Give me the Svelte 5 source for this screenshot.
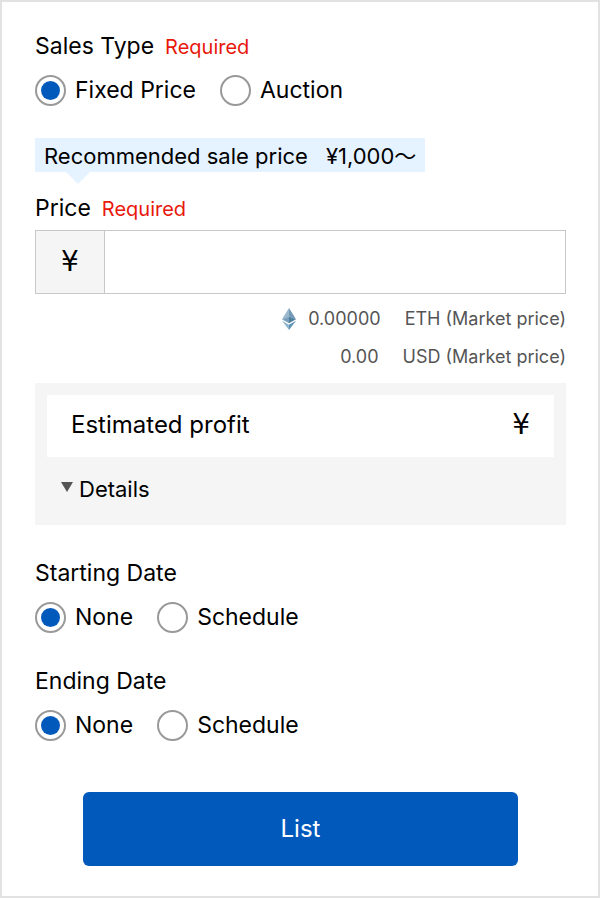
<script lang="ts">
  let salesType = $state("fixed");
  let startingDate = $state("none");
  let endingDate = $state("none");
  let price = $state("");
  let detailsOpen = $state(false);

  const dateOptions = [
    { value: "none", label: "None" },
    { value: "schedule", label: "Schedule" },
  ];
</script>

<form class="listing-form" onsubmit={(e) => e.preventDefault()}>
  <fieldset>
    <legend>Sales Type <span class="required">Required</span></legend>
    <div class="options">
      <label class="option">
        <input type="radio" name="sales-type" value="fixed" bind:group={salesType} />
        <span>Fixed Price</span>
      </label>
      <label class="option">
        <input type="radio" name="sales-type" value="auction" bind:group={salesType} />
        <span>Auction</span>
      </label>
    </div>
  </fieldset>

  <div class="price-section">
    <p class="recommended">
      <span>Recommended sale price</span>
      <span>¥1,000〜</span>
    </p>
    <label class="title" for="price">Price <span class="required">Required</span></label>
    <div class="price-field">
      <span class="yen prefix">¥</span>
      <input id="price" type="text" inputmode="numeric" bind:value={price} />
    </div>
    <div class="market-row">
      <svg class="eth" viewBox="0 0 14 22" aria-hidden="true">
        <path d="M7 0 0 11.2 7 8.4Z" fill="#9ab8cd" />
        <path d="M7 0v8.4l7 2.8Z" fill="#7399b5" />
        <path d="M0 11.2 7 8.4v6.8Z" fill="#7a9fba" />
        <path d="M14 11.2 7 8.4v6.8Z" fill="#50809f" />
        <path d="M0 12.8 7 22v-5.2Z" fill="#8fb4cd" />
        <path d="M14 12.8 7 22v-5.2Z" fill="#5f93b6" />
      </svg>
      <span class="amount">0.00000</span>
      <span>ETH (Market price)</span>
    </div>
    <div class="market-row">
      <span class="amount">0.00</span>
      <span>USD (Market price)</span>
    </div>
  </div>

  <div class="profit">
    <div class="profit-total">
      <span>Estimated profit</span>
      <span class="yen">¥</span>
    </div>
    <button
      type="button"
      class="details-btn"
      aria-expanded={detailsOpen}
      onclick={() => (detailsOpen = !detailsOpen)}
    >
      <svg class="caret" viewBox="0 0 12 10" aria-hidden="true">
        <path d="M0 0h12L6 10Z" fill="#555" />
      </svg>
      Details
    </button>
  </div>

  <fieldset>
    <legend>Starting Date</legend>
    <div class="options">
      {#each dateOptions as o}
        <label class="option">
          <input type="radio" name="starting-date" value={o.value} bind:group={startingDate} />
          <span>{o.label}</span>
        </label>
      {/each}
    </div>
  </fieldset>

  <fieldset>
    <legend>Ending Date</legend>
    <div class="options">
      {#each dateOptions as o}
        <label class="option">
          <input type="radio" name="ending-date" value={o.value} bind:group={endingDate} />
          <span>{o.label}</span>
        </label>
      {/each}
    </div>
  </fieldset>

  <button type="submit" class="list-btn">List</button>
</form>

<style>
  .listing-form {
    box-sizing: border-box;
    min-height: 100vh;
    padding: 28px 32px 30px 33px;
    border: 2px solid #e2e2e2;
    background: #fff;
    color: #000;
    font-family: Inter, "Noto Sans CJK JP", sans-serif;
    font-size: 23px;
    line-height: 32px;
    display: flex;
    flex-direction: column;
    gap: 32px;
  }

  fieldset {
    min-width: 0;
    margin: 0;
    padding: 0;
    border: 0;
  }

  legend,
  .title {
    display: flex;
    align-items: baseline;
    gap: 11px;
    padding: 0;
  }

  .required {
    color: #e8180c;
    font-size: 20px;
    line-height: 24px;
  }

  .options {
    display: flex;
    gap: 24px;
    margin-top: 12px;
  }

  .option {
    display: flex;
    align-items: center;
    gap: 9px;
  }

  input[type="radio"] {
    appearance: none;
    box-sizing: border-box;
    width: 31px;
    height: 31px;
    margin: 0;
    border: 2px solid #999;
    border-radius: 50%;
    display: grid;
    place-items: center;
  }

  input[type="radio"]:checked::before {
    content: "";
    width: 19px;
    height: 19px;
    border-radius: 50%;
    background: #0059bb;
  }

  .price-section {
    display: flex;
    flex-direction: column;
  }

  .recommended {
    position: relative;
    align-self: flex-start;
    display: flex;
    gap: 18px;
    margin: 0 0 20px;
    padding: 2px 9px 0;
    background: #e5f2ff;
    font-size: 22px;
  }

  .recommended::after {
    content: "";
    position: absolute;
    top: 100%;
    left: 31px;
    border: 12px solid transparent;
    border-top-color: #e5f2ff;
    border-bottom: 0;
  }

  .price-field {
    display: flex;
    height: 62px;
    margin: 6px 0;
    border: 1px solid #c8c8c8;
  }

  .yen {
    font-family: "DejaVu Sans", sans-serif;
    font-size: 28px;
  }

  .prefix {
    width: 68px;
    border-right: 1px solid #c8c8c8;
    background: #f5f5f5;
    line-height: 62px;
    text-align: center;
  }

  .price-field input {
    flex: 1;
    min-width: 0;
    padding: 0 16px;
    border: 0;
    font: inherit;
  }

  .market-row {
    display: flex;
    align-items: center;
    justify-content: flex-end;
    color: #555;
    font-size: 18px;
    line-height: 38px;
  }

  .eth {
    width: 14px;
    height: 22px;
    margin-right: 12px;
  }

  .amount {
    margin-right: 24px;
  }

  .profit {
    margin-top: -25px;
    padding: 12px 12px 20px;
    background: #f5f5f5;
  }

  .profit-total {
    display: flex;
    justify-content: space-between;
    padding: 14px 24px 16px;
    background: #fff;
    font-size: 24px;
  }

  .details-btn {
    display: flex;
    align-items: center;
    gap: 6px;
    margin: 16px 0 0 14px;
    padding: 0;
    border: 0;
    background: none;
    color: inherit;
    font: inherit;
    font-size: 22px;
  }

  .caret {
    width: 12px;
    height: 10px;
    margin-bottom: 4px;
  }

  .list-btn {
    width: 82%;
    margin: 19px auto 0;
    padding: 21px;
    border: 0;
    border-radius: 6px;
    background: #0059bb;
    color: #fff;
    font: inherit;
    font-size: 24px;
  }
</style>
